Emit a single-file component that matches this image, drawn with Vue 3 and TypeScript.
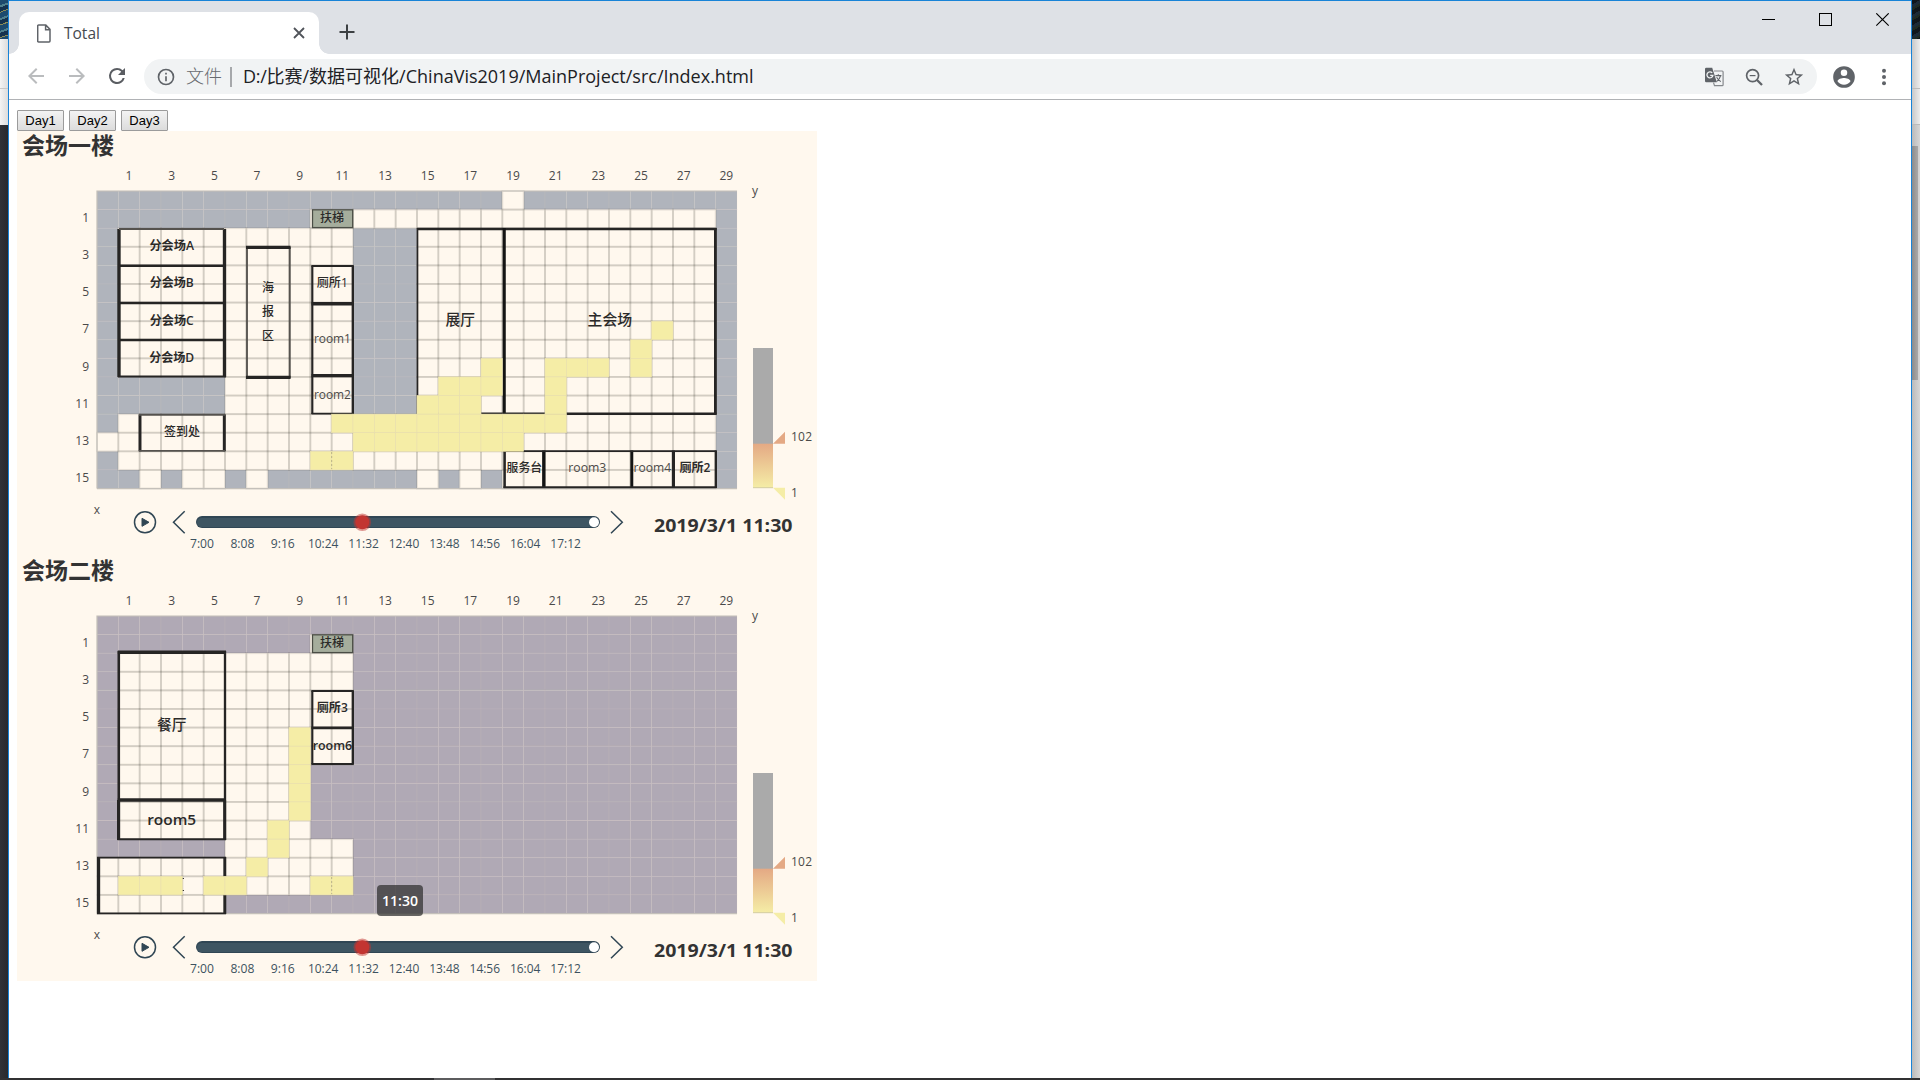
<script setup lang="ts">
type Line = [number, number, number, number, number, string?]
interface Label { t: string; x: number; y: number; s: number; w: number; b?: number }
interface Floor {
  id: string
  title: string
  blocked: string
  map: string[]
  heat: [number, number, number][]
  lines: Line[]
  labels: Label[]
}

const CW = 640 / 30
const CH = 297.5 / 16
const X0 = 80
const Y0 = 60

const DARK = '#262524'
const SOFT = '#55524e'

const colLabels = Array.from({ length: 15 }, (_, i) => i * 2 + 1)
const rowLabels = Array.from({ length: 8 }, (_, i) => i * 2 + 1)
const times = ['7:00', '8:08', '9:16', '10:24', '11:32', '12:40', '13:48', '14:56', '16:04', '17:12']

// '#' is a wall cell, '.' is a walkable cell
const floors: Floor[] = [
  {
    id: 'f1',
    title: '会场一楼',
    blocked: '#b0b4bc',
    map: [
      '###################.##########',
      '##########...................#',
      '#...........###..............#',
      '#...........###..............#',
      '#...........###..............#',
      '#...........###..............#',
      '#...........###..............#',
      '#...........###..............#',
      '#...........###..............#',
      '#...........###..............#',
      '######......###..............#',
      '######......###..............#',
      '#............................#',
      '.............................#',
      '#............................#',
      '##.#..#.#######.#.#..........#',
    ],
    heat: [
      [7, 26, 26], [8, 25, 25], [9, 25, 25], [9, 21, 23], [9, 18, 18],
      [10, 16, 18], [10, 21, 21], [11, 15, 17], [11, 21, 21],
      [12, 11, 21], [13, 12, 19], [14, 10, 11],
    ],
    lines: [
      [102, 98, 102, 246, 3], [207.5, 98, 207.5, 246, 3], [102, 98, 207, 98, 1.7, SOFT],
      [102, 134.7, 207, 134.7, 2], [102, 172, 207, 172, 2], [102, 209, 207, 209, 2], [101, 245.5, 209, 245.5, 1.5],
      [230, 116, 230, 247, 1.5, SOFT], [272.8, 116, 272.8, 247, 1.5, SOFT],
      [229, 116.3, 273.6, 116.3, 2.8], [229, 246.3, 273.6, 246.3, 2.8],
      [295.3, 134.5, 295.3, 283, 1.8], [335.8, 134.5, 335.8, 283, 2],
      [294.5, 135, 336.6, 135, 1.5], [294.5, 172.7, 336.6, 172.7, 3], [294.5, 244.6, 336.6, 244.6, 3],
      [294.5, 282.6, 336.6, 282.6, 1.6],
      [123, 283.3, 123, 320.3, 2.6], [207.3, 283.3, 207.3, 320.3, 2.6],
      [122, 283.7, 208, 283.7, 1.5, SOFT], [122, 319.8, 208, 319.8, 1.5, SOFT],
      [400.5, 97, 400.5, 283, 1.3], [400, 97.9, 699.5, 97.9, 2.2], [487.2, 97, 487.2, 283, 2.8, '#141414'],
      [698.4, 97, 698.4, 283.6, 2.5], [400, 282.4, 528, 282.4, 1.4], [528, 282.8, 699.5, 282.8, 2.2],
      [487.6, 319.5, 487.6, 357, 2.2], [526.8, 319.5, 526.8, 357, 3, '#141414'], [614.8, 319.5, 614.8, 357, 2.6, '#141414'],
      [656.4, 319.5, 656.4, 357, 2.8], [698.8, 319.5, 698.8, 357, 2],
      [486.5, 320, 699.5, 320, 1.4], [486.5, 356.3, 699.5, 356.3, 1.6],
    ],
    labels: [
      { t: '分会场A', x: 154.7, y: 115, s: 12, w: 44.5, b: 600 },
      { t: '分会场B', x: 154.7, y: 152, s: 12, w: 44, b: 600 },
      { t: '分会场C', x: 154.7, y: 189.7, s: 12, w: 44, b: 600 },
      { t: '分会场D', x: 154.7, y: 226.7, s: 12, w: 45, b: 600 },
      { t: '海', x: 251, y: 156.7, s: 12, w: 12, b: 500 },
      { t: '报', x: 251, y: 180.5, s: 12, w: 12, b: 500 },
      { t: '区', x: 251, y: 204.5, s: 12, w: 12, b: 500 },
      { t: '扶梯', x: 315, y: 86.7, s: 12, w: 24, b: 500 },
      { t: '厕所1', x: 315.3, y: 152, s: 12, w: 31, b: 500 },
      { t: 'room1', x: 315.4, y: 208.6, s: 12, w: 37 },
      { t: 'room2', x: 315.4, y: 264.6, s: 12, w: 37 },
      { t: '签到处', x: 165, y: 301, s: 12, w: 36, b: 500 },
      { t: '展厅', x: 443.3, y: 188.4, s: 15, w: 29.5, b: 500 },
      { t: '主会场', x: 592.8, y: 188.4, s: 15, w: 44.5, b: 500 },
      { t: '服务台', x: 507.3, y: 336.7, s: 12, w: 35.5, b: 500 },
      { t: 'room3', x: 570.3, y: 337, s: 12, w: 38 },
      { t: 'room4', x: 635.3, y: 337, s: 12, w: 37.5 },
      { t: '厕所2', x: 678, y: 336.7, s: 12, w: 31, b: 600 },
    ],
  },
  {
    id: 'f2',
    title: '会场二楼',
    blocked: '#b0a9b5',
    map: [
      '##############################',
      '##########..##################',
      '#...........##################',
      '#...........##################',
      '#...........##################',
      '#...........##################',
      '#...........##################',
      '#...........##################',
      '#.........####################',
      '#.........####################',
      '#.........####################',
      '#.........####################',
      '######......##################',
      '............##################',
      '............##################',
      '......########################',
    ],
    heat: [
      [6, 9, 9], [7, 9, 9], [8, 9, 9], [9, 9, 9], [10, 9, 9], [11, 8, 8], [12, 8, 8],
      [13, 7, 7], [14, 1, 3], [14, 5, 6], [14, 10, 11],
    ],
    lines: [
      [101.8, 95, 101.8, 244, 2.2], [208, 95, 208, 244, 2], [100.8, 96.2, 209, 96.2, 3],
      [100.8, 244, 209, 244, 3], [101.6, 244, 101.6, 284, 2.8], [207.7, 244, 207.7, 284, 2.8], [100.5, 283.3, 209, 283.3, 1.6],
      [295.3, 134.5, 295.3, 208.5, 1.8], [335.8, 134.5, 335.8, 208.5, 2], [294.5, 135, 336.6, 135, 1.6],
      [294.5, 171.8, 336.6, 171.8, 2.4], [294.5, 208, 336.6, 208, 1.8],
      [81.6, 301, 81.6, 358, 2.8], [207.8, 301, 207.8, 358, 2.6], [80, 301.6, 209, 301.6, 1.5], [80, 357.3, 209, 357.3, 1.5],
    ],
    labels: [
      { t: '扶梯', x: 315, y: 86.7, s: 12, w: 24, b: 500 },
      { t: '厕所3', x: 315.3, y: 152, s: 12, w: 31, b: 600 },
      { t: 'room6', x: 315.4, y: 189.7, s: 12, w: 39.5, b: 600 },
      { t: '餐厅', x: 154.7, y: 168.4, s: 15, w: 29.5, b: 500 },
      { t: 'room5', x: 154.7, y: 264, s: 15, w: 49, b: 600 },
    ],
  },
]

interface Cell { x: number; y: number; key: string }
function cells(f: Floor, ch: string): Cell[] {
  const out: Cell[] = []
  f.map.forEach((row, j) => {
    for (let i = 0; i < 30; i++) {
      if (row[i] === ch) out.push({ x: X0 + i * CW, y: Y0 + j * CH, key: `${j}-${i}` })
    }
  })
  return out
}
function heatCells(f: Floor): Cell[] {
  const out: Cell[] = []
  for (const [j, a, b] of f.heat) {
    for (let i = a; i <= b; i++) out.push({ x: X0 + i * CW, y: Y0 + j * CH, key: `${j}-${i}` })
  }
  return out
}
const isLatin = (t: string) => /^[a-z0-9]+$/.test(t)
</script>

<template>
  <div class="screen">
    <div class="row">
      <div class="side left"><i class="art"></i><i class="pale"></i><i class="pale two"></i></div>
      <div class="window">
        <div class="strip">
          <div class="tab">
            <svg class="page" width="14" height="19" viewBox="0 0 14 19" fill="none" stroke="#5f6368" stroke-width="1.5">
              <path d="M1.6 1h7.2l4.2 4.4V17a.9.9 0 0 1-.9.9H1.6a.9.9 0 0 1-.9-.9V1.9a.9.9 0 0 1 .9-.9zM8.6 1v4.7H13" />
            </svg>
            <span class="tabname">Total</span>
            <svg class="x" width="12" height="12" viewBox="0 0 12 12" stroke="#50545a" stroke-width="1.8"><path d="M1 1l10 10M11 1L1 11" /></svg>
          </div>
          <svg class="plus" width="16" height="16" viewBox="0 0 16 16" stroke="#3c4043" stroke-width="2"><path d="M8 .5v15M.5 8h15" /></svg>
          <svg class="ctl" width="128" height="14" viewBox="0 0 128 14" fill="none" stroke="#000" shape-rendering="crispEdges">
            <path d="M0 6.5h13M57.5.5h12v12h-12z" />
            <path shape-rendering="auto" d="M114.3.3l12.4 12.4M126.7.3L114.3 12.7" stroke-width="1.1" />
          </svg>
        </div>
        <div class="toolbar">
          <svg class="nav" viewBox="0 0 24 24" fill="#babcbe"><path d="M20 11H7.83l5.59-5.59L12 4l-8 8 8 8 1.41-1.41L7.83 13H20v-2z" /></svg>
          <svg class="nav" viewBox="0 0 24 24" fill="#babcbe"><path d="M12 4l-1.41 1.41L16.17 11H4v2h12.17l-5.58 5.59L12 20l8-8z" /></svg>
          <svg class="nav" viewBox="0 0 24 24" fill="#5a5d62"><path d="M17.65 6.35A7.96 7.96 0 0 0 12 4a8 8 0 1 0 7.73 10h-2.08A6 6 0 1 1 12 6c1.66 0 3.14.69 4.22 1.78L13 11h7V4l-2.35 2.35z" /></svg>
          <div class="omni">
            <svg class="info" viewBox="0 0 24 24" fill="#5f6368"><path d="M11 17h2v-6h-2v6zm1-15a10 10 0 1 0 0 20 10 10 0 0 0 0-20zm0 18a8 8 0 1 1 0-16 8 8 0 0 1 0 16zM11 9h2V7h-2v2z" /></svg>
            <span class="scheme">文件</span>
            <i class="bar"></i>
            <span class="url"><span class="p1">D:/</span>比赛/数据可视化<span class="p2">/ChinaVis2019/MainProject/src/Index.html</span></span>
            <svg class="tool" viewBox="0 0 24 24">
              <path d="M12 6h8.2a.9.9 0 0 1 .9.9v12.8a.9.9 0 0 1-.9.9h-7.7l-1-3" fill="none" stroke="#85888c" stroke-width="1.2" />
              <path d="M4.2 2.8h6l4.6 14.4H4.2a1.2 1.2 0 0 1-1.2-1.2V4a1.2 1.2 0 0 1 1.2-1.2z" fill="#5f6368" />
              <path d="M10.2 7.9a3 3 0 1 0 .7 2.5H8.2" fill="none" stroke="#f1f3f4" stroke-width="1.3" />
              <path d="M13.4 10.6h6M16.3 9.3v1.3M18.6 10.6c-.6 2.6-2 4.4-4 6M14.6 12.2c1 1.8 2.4 3.2 4.2 4.4" fill="none" stroke="#5f6368" stroke-width="1.1" />
            </svg>
            <svg class="tool" viewBox="0 0 24 24" fill="none" stroke="#5f6368">
              <circle cx="10.6" cy="10.6" r="6" stroke-width="1.7" /><path d="M15 15l5 5" stroke-width="2.3" /><path d="M7.7 10.6h5.8" stroke-width="1.2" />
            </svg>
            <svg class="tool star" viewBox="0 0 24 24" fill="#5f6368"><path d="M22 9.24l-7.19-.62L12 2 9.19 8.63 2 9.24l5.46 4.73L5.82 21 12 17.27 18.18 21l-1.63-7.03L22 9.24zM12 15.4l-3.76 2.27 1-4.28-3.32-2.88 4.38-.38L12 6.1l1.71 4.04 4.38.38-3.32 2.88 1 4.28L12 15.4z" /></svg>
          </div>
          <svg class="user" viewBox="0 0 24 24" fill="#5f6368"><path d="M12 2a10 10 0 1 0 0 20 10 10 0 0 0 0-20zm0 3a3 3 0 1 1 0 6 3 3 0 0 1 0-6zm0 14.2a7.2 7.2 0 0 1-6-3.22c.03-1.99 4-3.08 6-3.08s5.97 1.09 6 3.08a7.2 7.2 0 0 1-6 3.22z" /></svg>
          <svg class="more" viewBox="0 0 24 24" fill="#5f6368"><circle cx="12" cy="5.7" r="2" /><circle cx="12" cy="12" r="2" /><circle cx="12" cy="18.3" r="2" /></svg>
        </div>
        <div class="content">
          <div class="days"><button v-for="d in 3" :key="d">Day{{ d }}</button></div>
          <svg v-for="f in floors" :key="f.id" class="chart" width="800" height="425" viewBox="0 0 800 425">
            <rect width="800" height="425" fill="#fff8ee" />
            <text x="5" y="22.7" class="title">{{ f.title }}</text>
            <g class="axis">
              <text v-for="c in colLabels" :key="c" :x="X0 + (c + 0.5) * CW" y="49" text-anchor="middle">{{ c }}</text>
              <text v-for="r in rowLabels" :key="r" x="72" :y="Y0 + (r + 0.5) * CH + 3" text-anchor="end">{{ r }}</text>
              <text x="738" y="63.5" text-anchor="middle">y</text>
              <text x="80" y="382.5" text-anchor="middle">x</text>
            </g>
            <rect v-for="c in cells(f, '#')" :key="'b' + c.key" :x="c.x" :y="c.y" :width="CW" :height="CH" :fill="f.blocked" stroke="#d2c9bd" stroke-opacity=".12" />
            <rect v-for="c in cells(f, '.')" :key="'o' + c.key" :x="c.x" :y="c.y" :width="CW" :height="CH" fill="#fff8ee" />
            <rect v-for="c in cells(f, '.')" :key="'s' + c.key" :x="c.x" :y="c.y" :width="CW" :height="CH" fill="none" stroke="#2c3228" stroke-opacity=".11" stroke-width="1.9" />
            <path d="M80 357.5V60H720M80 357.7H720" fill="none" stroke="#c4c0ba" stroke-width="1.2" />
            <rect x="295.5" y="78.8" width="40.2" height="17.8" fill="#a5ad9c" stroke="#4a4d45" stroke-width="1.3" />
            <line v-for="(l, i) in f.lines" :key="i" :x1="l[0]" :y1="l[1]" :x2="l[2]" :y2="l[3]" :stroke-width="l[4] + 0.35" :stroke="l[5] || DARK" />
            <text
              v-for="l in f.labels" :key="l.t" class="room" :class="{ light: isLatin(l.t) && !l.b }" :x="l.x" :y="l.y + (isLatin(l.t) ? l.s * 0.32 : l.s * 0.37)"
              :font-size="l.s" :font-weight="l.b || 400" :textLength="l.w" lengthAdjust="spacingAndGlyphs" text-anchor="middle"
            >{{ l.t }}</text>
            <path v-if="f.id === 'f2'" d="M165 322.5h2M165 334.5h2" stroke="#333" />
            <rect v-for="c in heatCells(f)" :key="'h' + c.key" :x="c.x" :y="c.y" :width="CW" :height="CH" fill="#f5eda6" stroke="#e9dfae" stroke-width=".6" />
            <path d="M314.7 321v17" stroke="#b9b284" stroke-dasharray="2 2" />
            <linearGradient :id="'g' + f.id" x1="0" y1="0" x2="0" y2="1"><stop offset="0" stop-color="#e4a984" /><stop offset="1" stop-color="#f5eda6" /></linearGradient>
            <rect x="736" y="217" width="20" height="96" fill="#aaa" />
            <rect x="736" y="312.7" width="20" height="44" :fill="`url(#g${f.id})`" />
            <path d="M736 356.7h20" stroke="#d3cda0" />
            <path d="M756 312.7h12v-12z" fill="#e4a984" />
            <path d="M756 356.7h12v12z" fill="#f5eda6" />
            <g class="axis"><text x="774" y="310" textLength="21">102</text><text x="774" y="366">1</text></g>
            <g fill="none" stroke="#304654" stroke-width="1.5">
              <circle cx="128" cy="391.3" r="10.5" />
              <path d="M125 387.3v8l7-4z" fill="#304654" stroke-width="1" />
              <path d="M167.7 380.3L156.5 391.3l11.2 11M594 380.3l11.3 11-11.3 11" />
            </g>
            <rect x="179" y="385" width="404" height="12" rx="6" fill="#304654" />
            <rect x="180" y="387" width="401" height="9" rx="4.5" fill="#3e5562" />
            <circle cx="577" cy="391.3" r="5" fill="#fff" />
            <circle cx="345.3" cy="391.3" r="8.8" fill="#c23531" opacity=".5" />
            <circle cx="345.3" cy="391.3" r="7" fill="#c23531" />
            <g class="tick">
              <text v-for="(t, i) in times" :key="t" :x="185 + i * 40.4" y="417" text-anchor="middle" :textLength="t.length === 4 ? 24 : 30.5" lengthAdjust="spacingAndGlyphs">{{ t }}</text>
            </g>
            <text x="637" y="401" class="date" textLength="138.5" lengthAdjust="spacingAndGlyphs">2019/3/1 11:30</text>
            <g v-if="f.id === 'f2'">
              <rect x="360" y="329" width="46" height="31" rx="4" fill="#323232" fill-opacity=".74" />
              <text x="383" y="349.8" class="tip" text-anchor="middle" textLength="36" lengthAdjust="spacingAndGlyphs">11:30</text>
            </g>
          </svg>
        </div>
      </div>
      <div class="side right"><i class="art"></i><i class="pale"></i><i class="pale two"></i><i class="thumbtop"></i><i class="thumb"></i></div>
    </div>
    <div class="taskbar"><i></i></div>
  </div>
</template>

<style>
html, body { overflow: hidden; }
</style>

<style scoped>
.screen { width: 1920px; height: 1080px; display: flex; flex-direction: column; overflow: hidden; background: #fff; font-family: "Open Sans", "Noto Sans CJK SC", sans-serif; }
.row { display: flex; height: 1078px; }
.side { width: 8px; display: flex; flex-direction: column; }
.side i { display: block; flex: none; }
.left { background: linear-gradient(90deg, #303237, #28292d); }
.left .art { height: 39px; background: repeating-linear-gradient(160deg, #1d4a6e 0 5px, #4e7f8d 5px 7px, #15324f 7px 11px, #8a8a55 11px 12px); }
.left .pale { height: 49px; background: linear-gradient(90deg, #f4f4f4, #dcdcdc); border-bottom: 1px solid #c8c8c8; }
.left .pale.two { height: 36px; border: 0; }
.right { background: linear-gradient(90deg, #bababa, #d6d6d6); }
.right .art { height: 39px; background: repeating-linear-gradient(150deg, #10161c 0 4px, #1c2a38 4px 7px, #1f2a22 7px 9px); }
.right .pale { height: 49px; background: linear-gradient(90deg, #c8c8c8, #ececec); border-bottom: 1px solid #bbb; }
.right .pale.two { height: 35px; }
.thumbtop { height: 21px; }
.thumb { width: 6px; height: 234px; background: linear-gradient(90deg, #8c8c8c, #a8a8a8); }
.window { width: 1902px; border: 1px solid #1883d7; border-bottom: 0; background: #fff; display: flex; flex-direction: column; }
.strip { height: 53px; background: #dee1e6; display: flex; align-items: flex-start; }
.tab { position: relative; margin: 11px 0 0 10px; width: 300px; height: 42px; box-sizing: border-box; background: #fff; border-radius: 10px 10px 0 0; display: flex; align-items: center; padding: 0 14px 0 18px; }
.tab::before, .tab::after { content: ""; position: absolute; bottom: 0; width: 10px; height: 10px; }
.tab::before { left: -10px; background: radial-gradient(circle at 0 0, transparent 9.5px, #fff 10px); }
.tab::after { right: -10px; background: radial-gradient(circle at 100% 0, transparent 9.5px, #fff 10px); }
.tabname { font-size: 15.5px; color: #45494f; margin-left: 13px; flex: 1; }
.x { margin-bottom: 1px; }
.plus { margin: 23px 0 0 20px; }
.ctl { margin: 12px 21px 0 auto; }
.toolbar { height: 45px; border-bottom: 1px solid #b0b2b5; display: flex; align-items: center; }
.nav { width: 24px; height: 24px; margin: 0 0 1px 16px; }
.nav:first-child { margin-left: 15px; margin-right: 1px; }
.omni { margin-left: 15px; box-sizing: border-box; width: 1673px; height: 35px; border-radius: 18px; background: #f1f3f4; display: flex; align-items: center; padding: 0 11px 0 12px; }
.info { width: 20px; height: 20px; }
.scheme { margin: 0 0 2px 10px; font-size: 18px; color: #686b70; font-weight: 300; line-height: 30px; }
.bar { width: 2px; height: 20px; background: #a6a8ab; margin: 0 11px 0 8px; }
.url { font-size: 18px; color: #202124; flex: 1; white-space: nowrap; line-height: 30px; margin-bottom: 2px; }
.p1 { letter-spacing: -.3px; }
.p2 { letter-spacing: 0; }
.tool { width: 24px; height: 24px; margin-left: 16px; }
.star { box-sizing: border-box; padding: 1px; }
.user { width: 26px; height: 26px; margin-left: 14px; }
.more { width: 24px; height: 24px; margin-left: 15px; }
.content { padding: 10px 0 0 8px; }
.days { display: flex; gap: 5px; height: 21px; }
.days button { width: 47px; height: 21px; box-sizing: border-box; padding: 0; border: 1px solid #9b9b9b; border-radius: 1px; background: linear-gradient(#f3f3f3, #dcdcdc); font: 400 13px "Liberation Sans", sans-serif; color: #000; line-height: 18px; }
.chart { display: block; overflow: visible; }
.title { font: 700 23px "Noto Sans CJK SC", sans-serif; fill: #333; }
.axis text { font-size: 12px; fill: #4a4a4a; }
.room { fill: #2b2a29; }
.room.light { fill: #4c4a48; }
.tick text { font-size: 12px; fill: #3d5260; }
.date { font-size: 18px; font-weight: 700; fill: #333; }
.tip { font-size: 14px; font-weight: 600; fill: #fff; }
.taskbar { height: 2px; background: #313133; }
.taskbar i { display: block; width: 61px; height: 2px; margin-left: 434px; background: #5c5c5e; }
</style>
